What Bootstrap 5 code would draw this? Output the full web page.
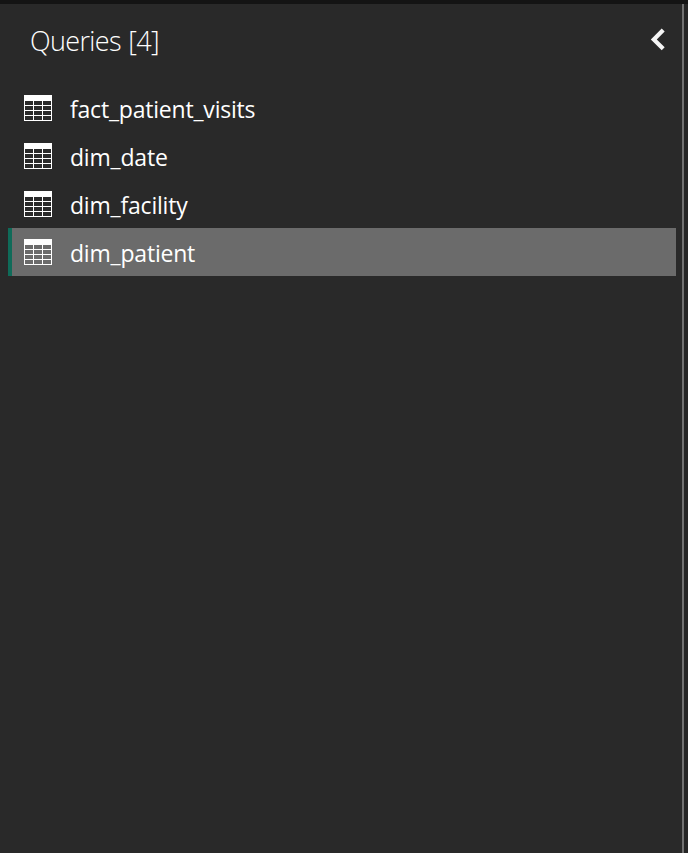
<!DOCTYPE html>
<html lang="en">
<head>
<meta charset="utf-8">
<meta name="viewport" content="width=device-width, initial-scale=1">
<title>Queries</title>
<link href="https://cdn.jsdelivr.net/npm/bootstrap@5.3.0/dist/css/bootstrap.min.css" rel="stylesheet">
<style>
  body { background: #252525; color: #fff; font-family: "Open Sans", "Noto Sans", sans-serif; border-top: 4px solid #141414; }
  .queries-pane { width: 684px; background: #292929; border-right: 2px solid #717171; }
  .pane-head { height: 80px; padding: 0 15px 6px 30px; }
  .pane-title { font-size: 27px; font-weight: 300; line-height: 36px; letter-spacing: -.65px; word-spacing: 1px; }
  .pane-head .btn { margin-bottom: 4px; }
  .query-item { height: 48px; margin: 0 6px 0 8px; padding: 2px 0 0 12px; border-left: 4px solid transparent; font-size: 23px; line-height: 32px; letter-spacing: -.2px; color: #fff; }
  .query-item.selected { background: #6b6b6b; border-left-color: #0f6b59; }
  .query-item svg { margin: -3px 18px 0 0; }
</style>
</head>
<body class="vh-100 overflow-hidden">
<aside class="queries-pane h-100">
  <header class="pane-head d-flex align-items-center justify-content-between">
    <h1 class="pane-title m-0">Queries [4]</h1>
    <button class="btn p-0 border-0 d-flex" aria-label="Collapse">
      <svg width="18" height="24" viewBox="0 0 18 24"><path d="M14.2 3 4.8 12.4l9.4 9.4" fill="none" stroke="#f5f5f5" stroke-width="4.2"/></svg>
    </button>
  </header>
  <svg class="d-none">
    <symbol id="table" viewBox="0 0 28 26"><path fill="#fff" fill-rule="evenodd" d="M0 0h28v26H0zM1 6v4h8V6zM10 6v4h8V6zM19 6v4h8V6zM1 11v4h8v-4zM10 11v4h8v-4zM19 11v4h8v-4zM1 16v4h8v-4zM10 16v4h8v-4zM19 16v4h8v-4zM1 21v4h8v-4zM10 21v4h8v-4zM19 21v4h8v-4z"/></symbol>
  </svg>
  <nav class="d-flex flex-column">
    <a class="query-item d-flex align-items-center text-decoration-none"><svg width="28" height="26"><use href="#table"/></svg><span>fact_patient_visits</span></a>
    <a class="query-item d-flex align-items-center text-decoration-none"><svg width="28" height="26"><use href="#table"/></svg><span>dim_date</span></a>
    <a class="query-item d-flex align-items-center text-decoration-none"><svg width="28" height="26"><use href="#table"/></svg><span>dim_facility</span></a>
    <a class="query-item selected d-flex align-items-center text-decoration-none"><svg width="28" height="26"><use href="#table"/></svg><span>dim_patient</span></a>
  </nav>
</aside>
<script src="https://cdn.jsdelivr.net/npm/bootstrap@5.3.0/dist/js/bootstrap.bundle.min.js"></script>
</body>
</html>
